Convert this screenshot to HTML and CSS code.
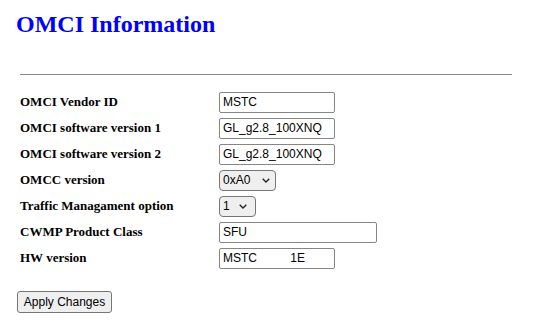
FILE: index.html
```html
<!DOCTYPE html>
<html lang="en">
  <head>
    <title>OMCI Information</title>
    <link rel="stylesheet" href="styles.css">
  </head>
  <body>
    <h2 class="title">OMCI Information</h2>

    <form class="omci-form">
      <hr class="divider">

      <table class="info-table">
        <tr>
          <td class="label">OMCI Vendor ID</td>
          <td><input class="field" type="text" value="MSTC"></td>
        </tr>
        <tr>
          <td class="label">OMCI software version 1</td>
          <td><input class="field" type="text" value="GL_g2.8_100XNQ"></td>
        </tr>
        <tr>
          <td class="label">OMCI software version 2</td>
          <td><input class="field" type="text" value="GL_g2.8_100XNQ"></td>
        </tr>
        <tr>
          <td class="label">OMCC version</td>
          <td>
            <span class="select-box omcc">
              <select class="choice">
                <option>0xA0</option>
              </select>
              <svg class="chevron" width="8" height="5" viewBox="0 0 8 5"><path d="M0.7 0.7 L4 4 L7.3 0.7" fill="none" stroke="#222" stroke-width="1.3"/></svg>
            </span>
          </td>
        </tr>
        <tr>
          <td class="label">Traffic Managament option</td>
          <td>
            <span class="select-box traffic">
              <select class="choice">
                <option>1</option>
              </select>
              <svg class="chevron" width="8" height="5" viewBox="0 0 8 5"><path d="M0.7 0.7 L4 4 L7.3 0.7" fill="none" stroke="#222" stroke-width="1.3"/></svg>
            </span>
          </td>
        </tr>
        <tr>
          <td class="label">CWMP Product Class</td>
          <td><input class="field wide" type="text" value="SFU"></td>
        </tr>
        <tr>
          <td class="label">HW version</td>
          <td><input class="field" type="text" value="MSTC          1E"></td>
        </tr>
      </table>

      <button class="apply" type="button">Apply Changes</button>
    </form>
  </body>
</html>
```

FILE: styles.css
```css
body {
  margin: 0;
  padding: 11px 16px 0 16px;
  font-family: "Liberation Serif", "Times New Roman", serif;
  background-color: white;
}

.title {
  margin: 0;
  color: #0000ff;
  font-size: 24px;
  font-weight: bold;
}

.divider {
  margin: 36px 0 0 4px;
  width: 492px;
  border: none;
  border-top: 1px solid #888888;
}

.info-table {
  margin: 14px 0 0 4px;
  border-collapse: collapse;
}

.info-table td {
  padding: 0;
  height: 26px;
  vertical-align: middle;
}

.label {
  width: 199px;
  font-size: 13px;
  font-weight: bold;
  color: black;
}

.field {
  display: block;
  box-sizing: border-box;
  width: 116px;
  height: 21px;
  padding: 1px 3px;
  border: 1px solid #858585;
  border-radius: 2px;
  font-family: "Liberation Sans", Arial, sans-serif;
  font-size: 12px;
  color: black;
}

.field.wide {
  width: 158px;
}

/* select with its own chevron, like the windows look */
.select-box {
  position: relative;
  display: block;
  height: 21px;
}

.select-box.omcc {
  width: 57px;
}

.select-box.traffic {
  width: 37px;
}

.choice {
  appearance: none;
  -webkit-appearance: none;
  box-sizing: border-box;
  width: 100%;
  height: 21px;
  margin: 0;
  padding: 0 0 0 3px;
  border: 1px solid #767676;
  border-radius: 4px;
  background-color: #efefef;
  font-family: "Liberation Sans", Arial, sans-serif;
  font-size: 12px;
  color: black;
}

.chevron {
  position: absolute;
  right: 6px;
  top: 8px;
  pointer-events: none;
}

.select-box.traffic .chevron {
  right: 9px;
}

.apply {
  display: block;
  box-sizing: border-box;
  width: 95px;
  height: 22px;
  margin: 20px 0 0 1px;
  padding: 0;
  border: 1px solid #767676;
  border-radius: 3px;
  background-color: #efefef;
  font-family: "Liberation Sans", Arial, sans-serif;
  font-size: 12px;
  color: black;
}
```
